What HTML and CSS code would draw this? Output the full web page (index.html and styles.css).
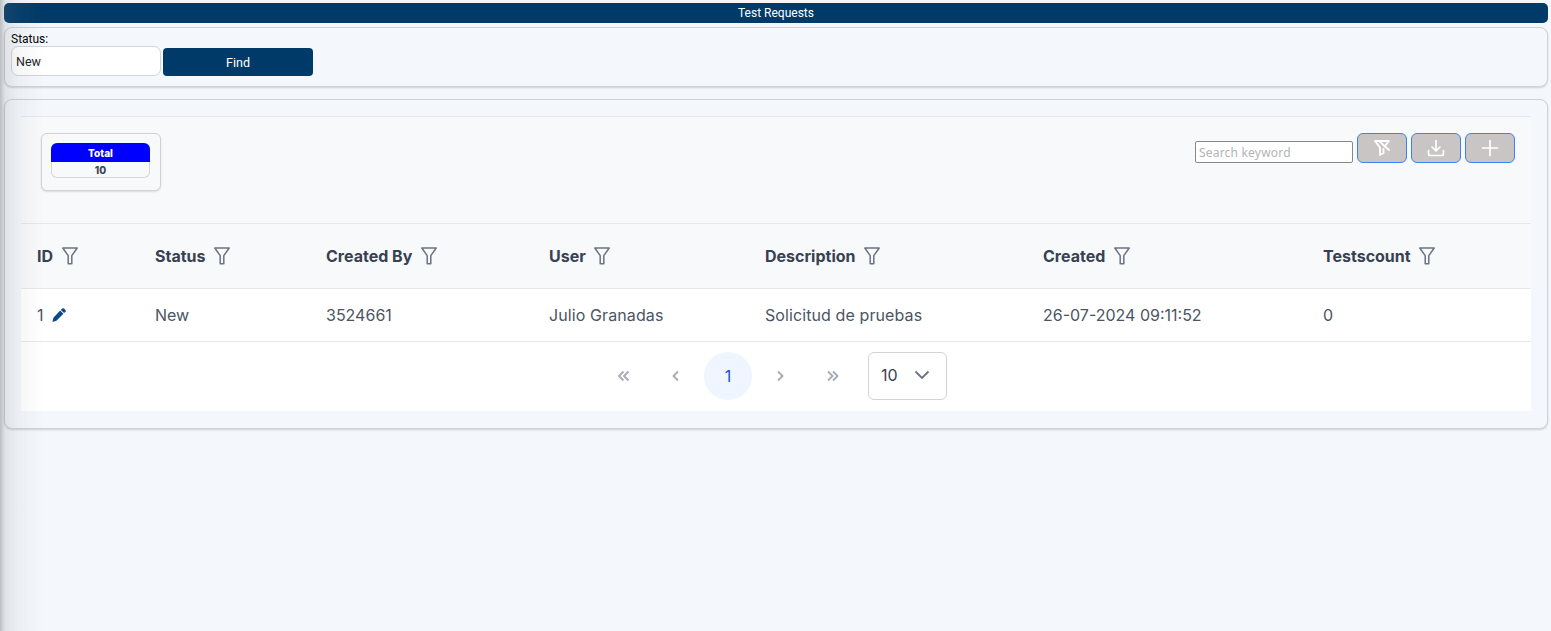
FILE: index.html
```html
<!DOCTYPE html>
<html lang="en">
<head>
<meta charset="utf-8">
<title>Test Requests</title>
<link rel="stylesheet" href="styles.css">
</head>
<body>
<div class="page">
  <header class="title-bar">Test Requests</header>
  <section class="filter-panel">
    <label class="filter-label" for="status">Status:</label>
    <div class="filter-row">
      <input id="status" class="status-input" value="New">
      <button class="find-btn">Find</button>
    </div>
  </section>
  <section class="main-panel">
    <div class="inner">
      <div class="toolbar">
        <div class="stat-card">
          <div class="stat">
            <div class="stat-head">Total</div>
            <div class="stat-value">10</div>
          </div>
        </div>
        <div class="actions">
          <input class="search" placeholder="Search keyword">
          <button class="tool-btn" aria-label="Clear filter">
            <svg width="18" height="18" viewBox="0 0 18 18" fill="none" stroke="#fff" stroke-width="1.900" stroke-linejoin="round" stroke-linecap="round"><path d="M2 2h14l-4.500 5.500M2 2l5 6.500v7.500l3.500-2v-4"/><path d="M6 2l10 9"/></svg>
          </button>
          <button class="tool-btn" aria-label="Download">
            <svg width="18" height="18" viewBox="0 0 18 18" fill="none" stroke="#fff" stroke-width="1.700" stroke-linecap="round" stroke-linejoin="round"><path d="M9 1.500v10M5 8l4 4 4-4"/><path d="M1.500 11.500v3a2 2 0 0 0 2 2h11a2 2 0 0 0 2-2v-3"/></svg>
          </button>
          <button class="tool-btn" aria-label="Add">
            <svg width="18" height="18" viewBox="0 0 18 18" fill="none" stroke="#fff" stroke-width="1.700" stroke-linecap="round"><path d="M9 1.500v15M1.500 9h15"/></svg>
          </button>
        </div>
      </div>
      <table class="grid">
        <thead>
          <tr>
            <th class="c-id"><span class="th">ID<svg class="funnel" viewBox="0 0 16 18"><path d="M.8 1h14.400L9.800 8.600v8.200H6.200V8.600z"/></svg></span></th>
            <th class="c-status"><span class="th">Status<svg class="funnel" viewBox="0 0 16 18"><path d="M.8 1h14.400L9.800 8.600v8.200H6.200V8.600z"/></svg></span></th>
            <th class="c-by"><span class="th">Created By<svg class="funnel" viewBox="0 0 16 18"><path d="M.8 1h14.400L9.800 8.600v8.200H6.200V8.600z"/></svg></span></th>
            <th class="c-user"><span class="th">User<svg class="funnel" viewBox="0 0 16 18"><path d="M.8 1h14.400L9.800 8.600v8.200H6.200V8.600z"/></svg></span></th>
            <th class="c-desc"><span class="th">Description<svg class="funnel" viewBox="0 0 16 18"><path d="M.8 1h14.400L9.800 8.600v8.200H6.200V8.600z"/></svg></span></th>
            <th class="c-created"><span class="th">Created<svg class="funnel" viewBox="0 0 16 18"><path d="M.8 1h14.400L9.800 8.600v8.200H6.200V8.600z"/></svg></span></th>
            <th class="c-count"><span class="th">Testscount<svg class="funnel" viewBox="0 0 16 18"><path d="M.8 1h14.400L9.800 8.600v8.200H6.200V8.600z"/></svg></span></th>
          </tr>
        </thead>
        <tbody>
          <tr>
            <td><span class="id-cell">1<svg class="pencil" viewBox="0 0 14 14"><path d="M10.200.6a1.300 1.300 0 0 1 1.800 0l1.400 1.400a1.300 1.300 0 0 1 0 1.800l-1.300 1.300-3.200-3.200zM8.200 2.600l3.200 3.200-7 7-4 1.200 1-4.200z"/></svg></span></td>
            <td>New</td>
            <td>3524661</td>
            <td class="wide">Julio Granadas</td>
            <td class="wide">Solicitud de pruebas</td>
            <td>26-07-2024 09:11:52</td>
            <td>0</td>
          </tr>
        </tbody>
      </table>
      <nav class="pager">
        <button class="page-btn" aria-label="First"><svg width="14" height="14" viewBox="0 0 14 14" class="chev"><path d="M6.500 2.500 2 7l4.500 4.500M11.500 2.500 7 7l4.500 4.500"/></svg></button>
        <button class="page-btn" aria-label="Previous"><svg width="14" height="14" viewBox="0 0 14 14" class="chev"><path d="M9 2.500 4.500 7 9 11.500"/></svg></button>
        <button class="page-btn current">1</button>
        <button class="page-btn" aria-label="Next"><svg width="14" height="14" viewBox="0 0 14 14" class="chev"><path d="M5 2.500 9.500 7 5 11.500"/></svg></button>
        <button class="page-btn" aria-label="Last"><svg width="14" height="14" viewBox="0 0 14 14" class="chev"><path d="M3 2.500 7.500 7 3 11.500M8 2.500 12.500 7 8 11.500"/></svg></button>
        <div class="page-size"><span>10</span><svg width="16" height="16" viewBox="0 0 16 16" class="caret"><path d="M1.500 4.500 8 11l6.500-6.500"/></svg></div>
      </nav>
    </div>
  </section>
</div>
</body>
</html>
```
FILE: styles.css
```css
* { box-sizing: border-box; }
html, body { height: 100%; }
body {
  margin: 0;
  overflow: hidden;
  background: #f4f7fb;
  font-family: Roboto, "Liberation Sans", sans-serif;
  color: #000;
}
body::before {
  content: "";
  position: fixed;
  top: 0;
  bottom: 0;
  left: 0;
  width: 44px;
  z-index: 2;
  pointer-events: none;
  background: linear-gradient(to right, rgba(110, 112, 116, .42) 0, rgba(120, 122, 126, .16) 5px, rgba(130, 132, 136, .07) 18px, rgba(140, 142, 146, 0) 100%);
}
.page {
  padding: 3px 3px 0 4px;
  display: flex;
  flex-direction: column;
}
.title-bar {
  height: 20px;
  background: #003a68;
  color: #fff;
  border-radius: 5px;
  font-size: 12px;
  line-height: 21px;
  text-align: center;
}
.filter-panel {
  margin-top: 4px;
  height: 60px;
  padding: 4px 6px 0;
  background: #f4f7fb;
  border: 1px solid #cfd2d6;
  border-radius: 8px;
  box-shadow: 0 1px 2px rgba(0, 0, 0, .15);
}
.filter-label {
  display: block;
  font-size: 12px;
  line-height: 14px;
}
.filter-row {
  display: flex;
  align-items: flex-end;
  gap: 2px;
}
.status-input {
  width: 150px;
  height: 30px;
  padding: 1px 4px 0;
  border: 1px solid #d0d3d9;
  border-radius: 7px;
  background: #fff;
  font: 12.5px Roboto, sans-serif;
  color: #222;
}
.find-btn {
  width: 150px;
  height: 28px;
  padding: 1px 0 0;
  border: 0;
  border-radius: 4px;
  background: #003a68;
  color: #fff;
  font: 12.5px Roboto, sans-serif;
}
.main-panel {
  margin-top: 12px;
  height: 330px;
  padding: 16px;
  background: #f4f7fb;
  border: 1px solid #cfd2d6;
  border-radius: 8px;
  box-shadow: 0 1px 2px rgba(0, 0, 0, .15);
}
.inner {
  height: 295px;
  background: #fff;
}
.toolbar {
  height: 108px;
  padding: 16px 16px 0 20px;
  display: flex;
  justify-content: space-between;
  align-items: flex-start;
  background: #f8f9fb;
  border-top: 1px solid #e5e7eb;
  border-bottom: 1px solid #e5e7eb;
}
.stat-card {
  width: 120px;
  height: 58px;
  padding: 9px;
  background: #f8f9fb;
  border: 1px solid #cfd2d6;
  border-radius: 6px;
  box-shadow: 0 1px 2px rgba(0, 0, 0, .12);
}
.stat {
  width: 99px;
  height: 35px;
  border-radius: 6px;
  overflow: hidden;
  font-family: Inter, sans-serif;
  font-size: 10px;
  font-weight: 800;
  text-align: center;
  box-shadow: inset 0 0 0 1px #d5d7dc;
}
.stat-head {
  height: 19px;
  background: #0000ff;
  color: #fff;
  line-height: 20px;
}
.stat-value {
  color: #3f4654;
  line-height: 17px;
}
.actions {
  display: flex;
  align-items: flex-end;
  gap: 4px;
}
.search {
  width: 158px;
  height: 22px;
  padding: 0 3px;
  border: 1px solid #85878c;
  border-radius: 2px;
  background: #fff;
  font: 12px "Noto Sans", sans-serif;
  letter-spacing: .2px;
}
.search::placeholder { color: #b3b3b8; opacity: 1; }
.tool-btn {
  width: 50px;
  height: 30px;
  padding: 0;
  border: 1px solid #3b82f6;
  border-radius: 6px;
  background: #c8c5c4;
  display: flex;
  align-items: center;
  justify-content: center;
}
.grid {
  width: 100%;
  table-layout: fixed;
  border-collapse: collapse;
  font-family: Inter, sans-serif;
  font-size: 16px;
}
.c-id { width: 118px; }
.c-status { width: 171px; }
.c-by { width: 223px; }
.c-user { width: 216px; }
.c-desc { width: 278px; }
.c-created { width: 280px; }
.c-count { width: 224px; }
.grid th {
  height: 64px;
  padding: 0 16px;
  background: #f8f9fb;
  border-bottom: 1px solid #e5e7eb;
  color: #374151;
  text-align: left;
  font-weight: 750;
}
.th {
  display: inline-flex;
  align-items: center;
  gap: 8.500px;
}
.funnel {
  width: 16px;
  height: 18px;
  fill: none;
  stroke: #6b7280;
  stroke-width: 1.500;
  stroke-linejoin: round;
}
.grid td {
  height: 53px;
  padding: 0 16px;
  background: #fff;
  border-bottom: 1px solid #e5e7eb;
  color: #4b5563;
  font-weight: 400;
}
.grid td.wide { letter-spacing: .1px; }
.id-cell {
  display: inline-flex;
  align-items: center;
  gap: 8px;
}
.pencil {
  width: 14px;
  height: 14px;
  fill: #0a4a86;
}
.pager {
  height: 69px;
  padding: 10px 5px 0 0;
  display: flex;
  justify-content: center;
  align-items: flex-start;
  gap: 4px;
  background: #fff;
}
.page-btn {
  width: 48px;
  height: 48px;
  padding: 0;
  border: 0;
  border-radius: 50%;
  background: transparent;
  display: flex;
  align-items: center;
  justify-content: center;
  color: #1d4ed8;
  font: 16px Inter, sans-serif;
}
.page-btn.current { background: #eff6ff; }
.chev {
  fill: none;
  stroke: #a8acb4;
  stroke-width: 1.900;
}
.page-size {
  width: 79px;
  height: 48px;
  margin-left: 8px;
  padding: 0 16px 2px 12px;
  border: 1px solid #d1d5db;
  border-radius: 6px;
  background: #fff;
  display: flex;
  align-items: center;
  justify-content: space-between;
  color: #374151;
  font: 16px Inter, sans-serif;
}
.caret {
  fill: none;
  stroke: #6b7280;
  stroke-width: 1.800;
}
```
